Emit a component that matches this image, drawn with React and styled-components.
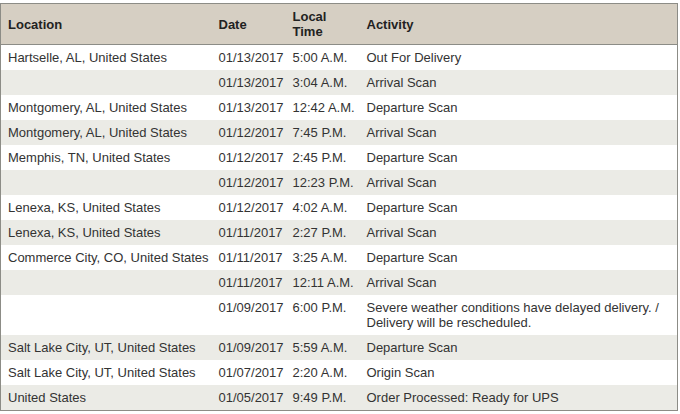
import styled, { createGlobalStyle } from "styled-components";

const GlobalStyle = createGlobalStyle`
    body {
        margin: 0;
        background: #fff;
        font-family: "Liberation Sans", Arial, sans-serif;
    }
`;

const rows = [
    ["Hartselle, AL, United States", "01/13/2017", "5:00 A.M.", "Out For Delivery"],
    ["", "01/13/2017", "3:04 A.M.", "Arrival Scan"],
    ["Montgomery, AL, United States", "01/13/2017", "12:42 A.M.", "Departure Scan"],
    ["Montgomery, AL, United States", "01/12/2017", "7:45 P.M.", "Arrival Scan"],
    ["Memphis, TN, United States", "01/12/2017", "2:45 P.M.", "Departure Scan"],
    ["", "01/12/2017", "12:23 P.M.", "Arrival Scan"],
    ["Lenexa, KS, United States", "01/12/2017", "4:02 A.M.", "Departure Scan"],
    ["Lenexa, KS, United States", "01/11/2017", "2:27 P.M.", "Arrival Scan"],
    ["Commerce City, CO, United States", "01/11/2017", "3:25 A.M.", "Departure Scan"],
    ["", "01/11/2017", "12:11 A.M.", "Arrival Scan"],
    ["", "01/09/2017", "6:00 P.M.", "Severe weather conditions have delayed delivery. / Delivery will be rescheduled."],
    ["Salt Lake City, UT, United States", "01/09/2017", "5:59 A.M.", "Departure Scan"],
    ["Salt Lake City, UT, United States", "01/07/2017", "2:20 A.M.", "Origin Scan"],
    ["United States", "01/05/2017", "9:49 P.M.", "Order Processed: Ready for UPS"],
];

const Wrapper = styled.div`
    padding-top: 3px;
    width: 678px;
`;

const Table = styled.table`
    width: 678px;
    border-collapse: collapse;
    table-layout: fixed;
    border: 1px solid #8c8c86;
    font-size: 13px;
    line-height: 15px;
    color: #333;
`;

const HeadCell = styled.th`
    box-sizing: border-box;
    background: #d6cfc3;
    text-align: left;
    vertical-align: middle;
    font-weight: bold;
    font-size: 13px;
    color: #222;
    padding: 5px 4px 5px 7px;
    width: ${({ $w }) => $w || "auto"};
    border-bottom: 1px solid #8c8c86;
`;

const Row = styled.tr`
    background: ${({ $alt }) => ($alt ? "#ebebe6" : "#fff")};
`;

const Cell = styled.td`
    padding: 5px 4px 5px 7px;
    vertical-align: top;
    white-space: ${({ $wrap }) => ($wrap ? "normal" : "nowrap")};
`;

const App = () => (
    <Wrapper>
        <GlobalStyle />
        <Table>
            <thead>
                <tr>
                    <HeadCell $w="211px">Location</HeadCell>
                    <HeadCell $w="74px">Date</HeadCell>
                    <HeadCell $w="74px">Local<br />Time</HeadCell>
                    <HeadCell>Activity</HeadCell>
                </tr>
            </thead>
            <tbody>
                {rows.map((r, i) => (
                    <Row key={i} $alt={i % 2 === 1}>
                        <Cell>{r[0]}</Cell>
                        <Cell>{r[1]}</Cell>
                        <Cell>{r[2]}</Cell>
                        <Cell $wrap>{r[3]}</Cell>
                    </Row>
                ))}
            </tbody>
        </Table>
    </Wrapper>
);

export default App;
